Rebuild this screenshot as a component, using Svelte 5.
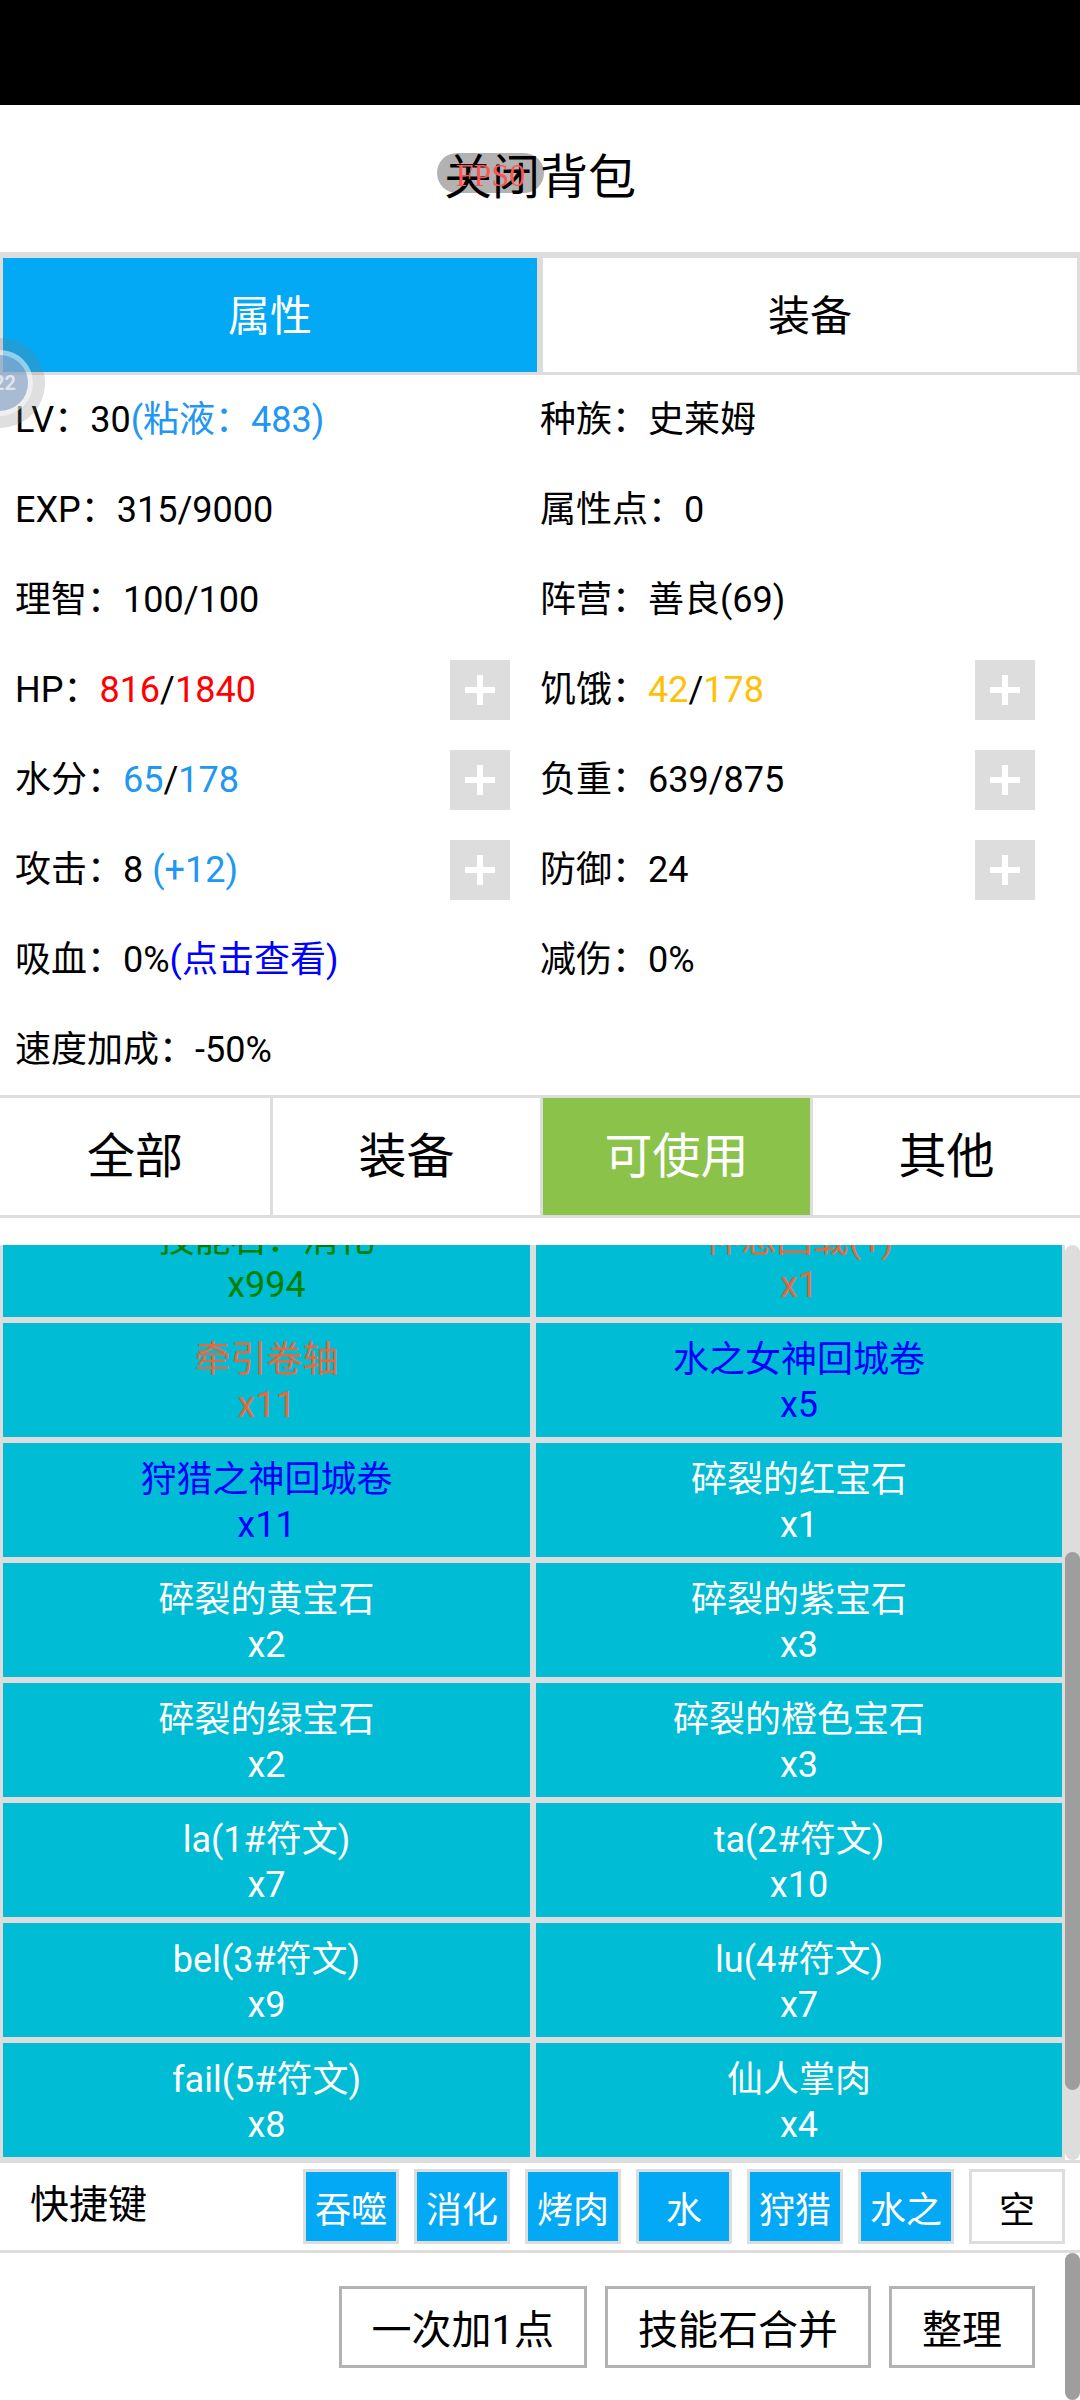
<script>
  const stats = [
    [{ t: 'LV：30' }, { t: '(粘液：483)', c: 'blue' }],
    [{ t: '种族：史莱姆' }],
    [{ t: 'EXP：315/9000' }],
    [{ t: '属性点：0' }],
    [{ t: '理智：100/100' }],
    [{ t: '阵营：善良(69)' }],
    [{ t: 'HP：' }, { t: '816', c: 'red' }, { t: '/' }, { t: '1840', c: 'red' }],
    [{ t: '饥饿：' }, { t: '42', c: 'yellow' }, { t: '/' }, { t: '178', c: 'yellow' }],
    [{ t: '水分：' }, { t: '65', c: 'blue' }, { t: '/' }, { t: '178', c: 'blue' }],
    [{ t: '负重：639/875' }],
    [{ t: '攻击：8 ' }, { t: '(+12)', c: 'blue' }],
    [{ t: '防御：24' }],
    [{ t: '吸血：0%' }, { t: '(点击查看)', c: 'link' }],
    [{ t: '减伤：0%' }],
    [{ t: '速度加成：-50%' }]
  ];
  const plusRows = [6, 7, 8, 9, 10, 11];
  const items = [
    ['技能石：消化', 'x994', 'green'], ['神恩回载(1)', 'x1', 'orange'],
    ['牵引卷轴', 'x11', 'orange'], ['水之女神回城卷', 'x5', 'navy'],
    ['狩猎之神回城卷', 'x11', 'navy'], ['碎裂的红宝石', 'x1', ''],
    ['碎裂的黄宝石', 'x2', ''], ['碎裂的紫宝石', 'x3', ''],
    ['碎裂的绿宝石', 'x2', ''], ['碎裂的橙色宝石', 'x3', ''],
    ['la(1#符文)', 'x7', ''], ['ta(2#符文)', 'x10', ''],
    ['bel(3#符文)', 'x9', ''], ['lu(4#符文)', 'x7', ''],
    ['fail(5#符文)', 'x8', ''], ['仙人掌肉', 'x4', '']
  ];
  const keys = ['吞噬', '消化', '烤肉', '水', '狩猎', '水之', '空'];
</script>

<div class="page">
  <div class="status"></div>

  <header class="head">关闭背包</header>

  <nav class="tabs">
    <div class="tab on">属性</div>
    <div class="tab">装备</div>
  </nav>

  <section class="stats">
    {#each stats as row, i}
      <div class="stat">
        <span class="stat-text">{#each row as s}<span class={s.c}>{s.t}</span>{/each}</span>
        {#if plusRows.includes(i)}
          <span class="plus">
            <svg viewBox="0 0 60 60" width="60" height="60"><path d="M15 30h30M30 15v30" stroke="#fff" stroke-width="6" fill="none" /></svg>
          </span>
        {/if}
      </div>
    {/each}
  </section>

  <nav class="filters">
    <div class="filter">全部</div>
    <div class="filter">装备</div>
    <div class="filter on">可使用</div>
    <div class="filter">其他</div>
  </nav>

  <section class="bag">
    <div class="list">
      <div class="grid">
        {#each items as it}
          <div class="item {it[2]}">
            <div>{it[0]}</div>
            <div>{it[1]}</div>
          </div>
        {/each}
      </div>
    </div>
    <div class="track"><div class="rail"><div class="thumb"></div></div></div>
  </section>

  <section class="keys">
    <div class="keys-label">快捷键</div>
    <div class="key-list">
      {#each keys as k}
        <div class="key" class:empty={k === '空'}>{k}</div>
      {/each}
    </div>
  </section>

  <footer class="foot">
    <button>一次加1点</button>
    <button>技能石合并</button>
    <button>整理</button>
    <div class="page-thumb"></div>
  </footer>

  <div class="fps">FPS0</div>
  <div class="ball"><div class="ball-ring"><div class="ball-core">22</div></div></div>
</div>

<style>
  :global(body) { margin: 0; background: #fff; }
  .page {
    position: relative;
    width: 1080px;
    height: 2400px;
    overflow: hidden;
    background: #fff;
    color: #000;
    font-family: Roboto, "Noto Sans CJK SC", sans-serif;
    font-size: 36px;
  }
  .status { height: 105px; background: #000; }
  .head {
    height: 147px;
    box-sizing: border-box;
    padding-bottom: 12px;
    display: flex;
    align-items: center;
    justify-content: center;
    font-size: 48px;
  }
  .tabs {
    display: grid;
    grid-template-columns: 534px 534px;
    gap: 6px;
    height: 123px;
    box-sizing: border-box;
    padding: 6px 3px 3px;
    background: #ddd;
  }
  .tab {
    background: #fff;
    display: flex;
    align-items: center;
    justify-content: center;
    font-size: 42px;
    padding-bottom: 6px;
  }
  .tab.on { background: #03a9f4; color: #fff; }

  .stats {
    display: grid;
    grid-template-columns: 540px 540px;
    grid-auto-rows: 90px;
    height: 720px;
  }
  .stat {
    display: flex;
    align-items: center;
    justify-content: space-between;
    padding: 0 30px 0 15px;
    white-space: pre;
  }
  .stat:nth-child(even) { padding: 0 45px 0 0; }
  .stat-text { margin-bottom: 9px; }
  .blue { color: #2196f3; }
  .red { color: #f00; }
  .yellow { color: #ffc107; }
  .link { color: #00f; }
  .plus { width: 60px; height: 60px; background: #ddd; display: block; }
  .plus svg { display: block; }

  .filters {
    display: grid;
    grid-template-columns: repeat(4, 270px);
    height: 123px;
    box-sizing: border-box;
    border-top: 3px solid #ddd;
    border-bottom: 3px solid #ddd;
    font-size: 48px;
  }
  .filter {
    display: flex;
    align-items: center;
    justify-content: center;
    border-left: 3px solid #ddd;
    padding-bottom: 9px;
  }
  .filter:first-child { border-left: 0; }
  .filter.on { background: #8bc34a; color: #fff; }

  .bag {
    margin-top: 27px;
    height: 918px;
    display: flex;
    background: #ddd;
  }
  .list { flex: 1; overflow: hidden; }
  .grid {
    margin-top: -42px;
    padding: 0 0 6px 3px;
    display: grid;
    grid-template-columns: 527px 526px;
    grid-auto-rows: 114px;
    gap: 6px;
  }
  .item {
    background: #00bcd4;
    color: #fff;
    text-align: center;
    padding-top: 15px;
    line-height: 45px;
    box-sizing: border-box;
  }
  .item.green { color: green; }
  .item.orange { color: #e8683a; }
  .item.navy { color: #00f; }
  .track {
    width: 18px;
    box-sizing: border-box;
    background: #fff;
    border-left: 3px solid #ddd;
    border-bottom: 3px solid #ddd;
  }
  .rail {
    height: 100%;
    background: #ddd;
    border-radius: 8px;
    overflow: hidden;
  }
  .thumb {
    margin-top: 307px;
    height: 538px;
    background: #9e9e9e;
    border-radius: 8px;
  }

  .keys {
    height: 87px;
    display: flex;
    align-items: center;
    justify-content: space-between;
    padding: 0 15px 0 30px;
  }
  .keys-label { font-size: 39px; margin-top: -12px; }
  .key-list { display: flex; gap: 15px; }
  .key {
    width: 96px;
    height: 75px;
    box-sizing: border-box;
    border: 3px solid #ddd;
    background: #03a9f4;
    color: #fff;
    display: flex;
    align-items: center;
    justify-content: center;
  }
  .key.empty { background: #fff; color: #000; }

  .foot {
    position: relative;
    height: 150px;
    box-sizing: border-box;
    border-top: 3px solid #ddd;
    display: flex;
    justify-content: flex-end;
    align-items: flex-start;
    gap: 18px;
    padding: 33px 45px 0 0;
  }
  .foot button {
    height: 82px;
    padding: 0 30px;
    border: 3px solid #b3b3b3;
    background: #fff;
    color: #000;
    font: inherit;
    font-size: 40px;
    white-space: nowrap;
  }
  .page-thumb {
    position: absolute;
    right: 0;
    top: 0;
    width: 15px;
    height: 147px;
    background: #9e9e9e;
    border-radius: 8px;
  }

  .fps {
    position: absolute;
    left: 437px;
    top: 153px;
    width: 107px;
    height: 40px;
    border-radius: 20px;
    background: rgba(0, 0, 0, 0.3);
    color: #f55;
    font-family: "Liberation Serif", serif;
    font-size: 32px;
    line-height: 44px;
    text-align: center;
  }
  .ball {
    position: absolute;
    left: -45px;
    top: 338px;
    width: 90px;
    height: 90px;
    border-radius: 50%;
    background: rgba(128, 128, 128, 0.25);
    display: flex;
    align-items: center;
    justify-content: center;
  }
  .ball-ring {
    width: 66px;
    height: 66px;
    border-radius: 50%;
    background: rgba(255, 255, 255, 0.5);
    display: flex;
    align-items: center;
    justify-content: center;
  }
  .ball-core {
    width: 56px;
    height: 56px;
    box-sizing: border-box;
    padding-right: 12px;
    border-radius: 50%;
    background: rgba(40, 90, 160, 0.35);
    color: rgba(255, 255, 255, 0.65);
    font-size: 20px;
    font-weight: 700;
    line-height: 56px;
    text-align: right;
    white-space: nowrap;
  }
</style>
